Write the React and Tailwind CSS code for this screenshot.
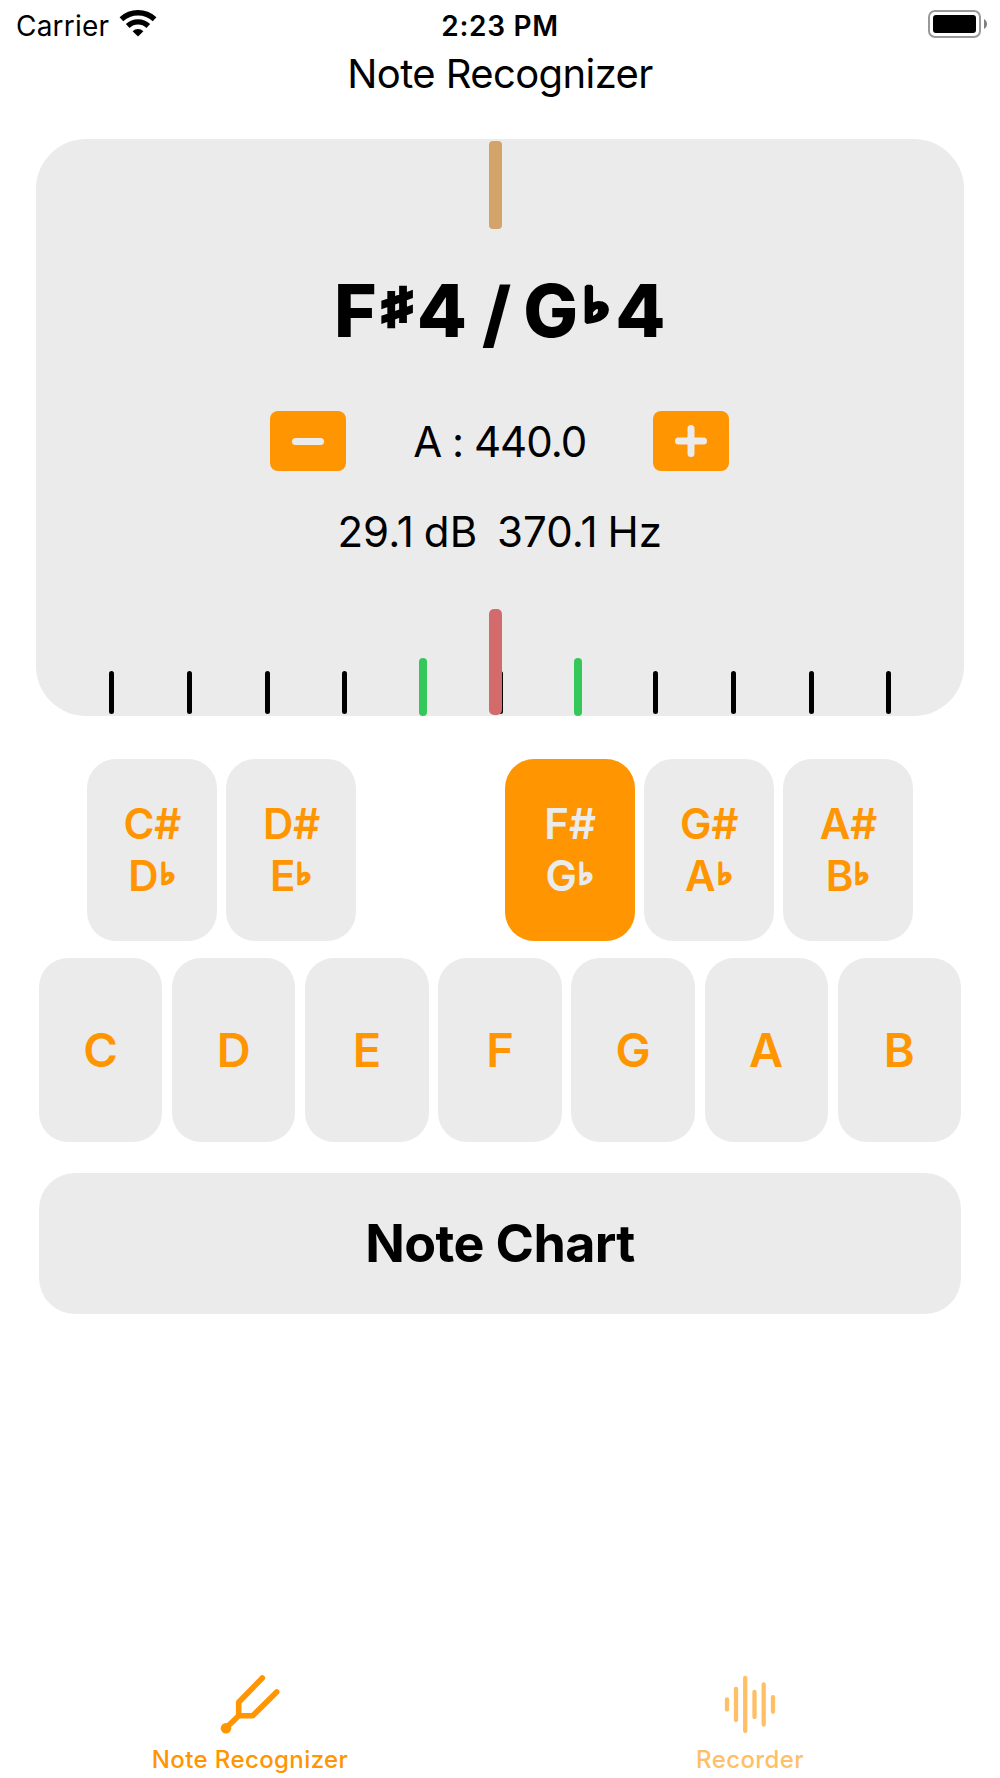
const sharpNotes = [
  { sharp: "C#", flat: "D" },
  { sharp: "D#", flat: "E" },
  null,
  { sharp: "F#", flat: "G", active: true },
  { sharp: "G#", flat: "A" },
  { sharp: "A#", flat: "B" },
];

const naturalNotes = ["C", "D", "E", "F", "G", "A", "B"];

// green marks show the "in tune" range around the center
const ticks = [
  "black",
  "black",
  "black",
  "black",
  "green",
  "black",
  "green",
  "black",
  "black",
  "black",
  "black",
];

const waveBars = [
  { x: 5, top: 24, bottom: 35 },
  { x: 14, top: 13.5, bottom: 45.5 },
  { x: 23.2, top: 2.5, bottom: 56.5 },
  { x: 32.5, top: 16.5, bottom: 42.5 },
  { x: 41.7, top: 9, bottom: 50 },
  { x: 51, top: 21.7, bottom: 37.3 },
];

const StatusBar = () => (
  <div className="grid grid-cols-3 items-center h-[50px] pl-4 pr-[13px]">
    <div className="flex items-center gap-[10px]">
      <span className="pt-px text-[28px] tracking-[0.2px]">Carrier</span>
      <svg width="38" height="28" viewBox="0 0 38 28" className="-mt-1">
        <g fill="none" stroke="#000" strokeWidth="5.4">
          <path d="M2.4 10.2a24.5 24.5 0 0 1 33.2 0" />
          <path d="M8.7 17a15 15 0 0 1 20.6 0" />
        </g>
        <path d="M13.6 22.2a8 8 0 0 1 10.8 0L19 27.6z" />
      </svg>
    </div>
    <span className="pt-px pr-[3px] text-[28px] font-semibold text-center tracking-[0.7px]">
      2:23 PM
    </span>
    <div className="flex items-center justify-end gap-[3px] -mt-0.5">
      <div className="w-[53px] h-[28px] border-2 border-[#999] rounded-[7px] p-[3px]">
        <div className="w-full h-full bg-black rounded-[3px]" />
      </div>
      <svg width="3" height="10" viewBox="0 0 3 10">
        <path d="M0 0c4 2 4 8 0 10z" fill="#808080" />
      </svg>
    </div>
  </div>
);

const TunerPanel = () => (
  <section className="relative flex flex-col items-center mt-[42px] ml-[36px] mr-[36.5px] h-[577px] rounded-[50px] bg-[#ebebeb]">
    <div className="absolute top-[2px] left-[453px] w-[13px] h-[88px] rounded-[4px] bg-[#d3a46a]" />

    <div className="flex items-center mt-[132px] h-[80px] text-[73px] font-extrabold whitespace-pre">
      <span>F</span>
      <span className="flex justify-center w-[40px] -mt-3.5 text-[46px] scale-x-127 [-webkit-text-stroke:4px_black]">
        ♯
      </span>
      <span>4</span>
      <span className="pt-[5px] -ml-px -mr-1"> / </span>
      <span>G</span>
      <span className="flex justify-center w-[37px] -mt-3.5 text-[46px] scale-x-125 [-webkit-text-stroke:4px_black]">
        ♭
      </span>
      <span>4</span>
    </div>

    <div className="flex items-center justify-between mt-[60px] w-[459px] h-[60px]">
      <button className="flex items-center justify-center w-[76px] h-[60px] rounded-[8px] bg-[#ff9500]">
        <span className="w-[32px] h-[7px] rounded-full bg-[#ebebeb]" />
      </button>
      <span className="text-[42px] tracking-[-1px]">A : 440.0</span>
      <button className="flex items-center justify-center w-[76px] h-[60px] rounded-[8px] bg-[#ff9500]">
        <svg width="32" height="32" viewBox="0 0 32 32">
          <path
            d="M16 3.5v25M3.5 16h25"
            stroke="#ebebeb"
            strokeWidth="7"
            strokeLinecap="round"
          />
        </svg>
      </button>
    </div>

    <div className="flex items-center mt-[30px] h-[60px] text-[42px] tracking-[0.1px] [word-spacing:-2px] whitespace-pre">
      29.1 dB  370.1 Hz
    </div>

    <div className="flex items-end mt-auto ml-px w-[855px]">
      {ticks.map((color, index) => (
        <div key={index} className="flex flex-1 justify-center">
          <div
            className={
              color === "green"
                ? "w-[8px] h-[58px] rounded-full bg-[#34c759]"
                : "w-[5px] h-[43px] mb-[2.5px] rounded-full bg-black"
            }
          />
        </div>
      ))}
    </div>

    <div className="absolute bottom-[1.5px] left-[453px] w-[13px] h-[106px] rounded-[5px] bg-[#d36a6c]" />
  </section>
);

const SharpKey = ({ note }) => (
  <button
    className={`flex flex-col items-center justify-center h-[182px] pl-px rounded-[29px] text-[42px] leading-[52.3px] font-semibold ${
      note.active ? "bg-[#ff9500] text-[#ebebeb]" : "bg-[#ebebeb] text-[#ff9500]"
    }`}
  >
    <span>{note.sharp}</span>
    <span className="flex">
      {note.flat}
      <span className="flex justify-center w-[18px] -mt-0.5 text-[29px] scale-x-115 [-webkit-text-stroke:1.6px_currentColor]">
        ♭
      </span>
    </span>
  </button>
);

const TabBar = () => (
  <nav className="grid grid-cols-2 mt-auto h-[118px] text-[24px] font-medium">
    <button className="flex flex-col items-center pt-[14px] text-[#ff9500]">
      <svg
        width="60"
        height="62"
        viewBox="0 0 60 62"
        fill="none"
        stroke="currentColor"
        strokeWidth="5.6"
        strokeLinecap="round"
        strokeLinejoin="round"
      >
        <path d="M42.3 4 18.7 28.3v13.4L5.7 54.3M18.7 41.7h14L56.7 18" />
        <circle cx="6" cy="54.3" r="5.3" fill="currentColor" stroke="none" />
      </svg>
      <span className="mt-[6px] leading-9 tracking-[0.4px]">Note Recognizer</span>
    </button>
    <button className="flex flex-col items-center pt-[14px] text-[#ffbf66]">
      <svg
        width="56"
        height="62"
        viewBox="0 0 56 62"
        stroke="currentColor"
        strokeWidth="4.3"
        strokeLinecap="round"
      >
        {waveBars.map((bar) => (
          <line key={bar.x} x1={bar.x} x2={bar.x} y1={bar.top + 1.5} y2={bar.bottom + 0.5} />
        ))}
      </svg>
      <span className="mt-[6px] leading-9 tracking-[0.4px]">Recorder</span>
    </button>
  </nav>
);

const App = () => {
  return (
    <main className="flex flex-col w-[1000px] h-[1778px] bg-white text-black font-[Inter,sans-serif]">
      <StatusBar />
      <h1 className="flex items-center justify-center h-[47px] text-[40px] tracking-[-0.6px]">
        Note Recognizer
      </h1>

      <TunerPanel />

      <div className="grid grid-cols-6 gap-[9.4px] mt-[43px] mx-[87px]">
        {sharpNotes.map((note, index) =>
          note ? <SharpKey key={index} note={note} /> : <div key={index} />
        )}
      </div>

      <div className="grid grid-cols-7 gap-[9.8px] mt-[17px] mx-[39px]">
        {naturalNotes.map((note) => (
          <button
            key={note}
            className="h-[184px] rounded-[29px] bg-[#ebebeb] text-[47px] font-semibold text-[#ff9500]"
          >
            {note}
          </button>
        ))}
      </div>

      <button className="mt-[31px] mx-[39px] h-[141px] rounded-[36px] bg-[#ebebeb] text-[52px] font-bold tracking-[-0.6px]">
        Note Chart
      </button>

      <TabBar />
    </main>
  );
};

export default App;
